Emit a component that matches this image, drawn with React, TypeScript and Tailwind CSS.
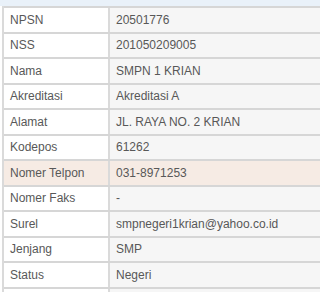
import React from "react";

const rows: [string, string][] = [
  ["NPSN", "20501776"],
  ["NSS", "201050209005"],
  ["Nama", "SMPN 1 KRIAN"],
  ["Akreditasi", "Akreditasi A"],
  ["Alamat", "JL. RAYA NO. 2 KRIAN"],
  ["Kodepos", "61262"],
  ["Nomer Telpon", "031-8971253"],
  ["Nomer Faks", "-"],
  ["Surel", "smpnegeri1krian@yahoo.co.id"],
  ["Jenjang", "SMP"],
  ["Status", "Negeri"],
  ["", ""],
];

export default function App() {
  return (
    <div className="w-[320px] h-[292px] overflow-hidden bg-white" style={{ fontFamily: '"Liberation Sans", Arial, sans-serif' }}>
      <div className="h-[6px] bg-[#e9f1f9]" />
      <div className="ml-[2px] border-l-2 border-[#dadada]">
        {rows.map(([k, v], i) => {
          const hl = k === "Nomer Telpon";
          return (
            <div key={i} className={`flex h-[25.5px] border-t-2 border-[#d6d6d6] text-[12px] text-[#585858] ${hl ? "bg-[#f6ebe4]" : ""}`}>
              <div className={`w-[106px] shrink-0 border-r-2 border-[#dadada] pl-[6px] flex items-center ${hl ? "" : "bg-white"}`}>{k}</div>
              <div className={`flex-1 pl-[6px] flex items-center ${hl ? "" : "bg-[#f6f6f6]"}`}>{v}</div>
            </div>
          );
        })}
      </div>
    </div>
  );
}
